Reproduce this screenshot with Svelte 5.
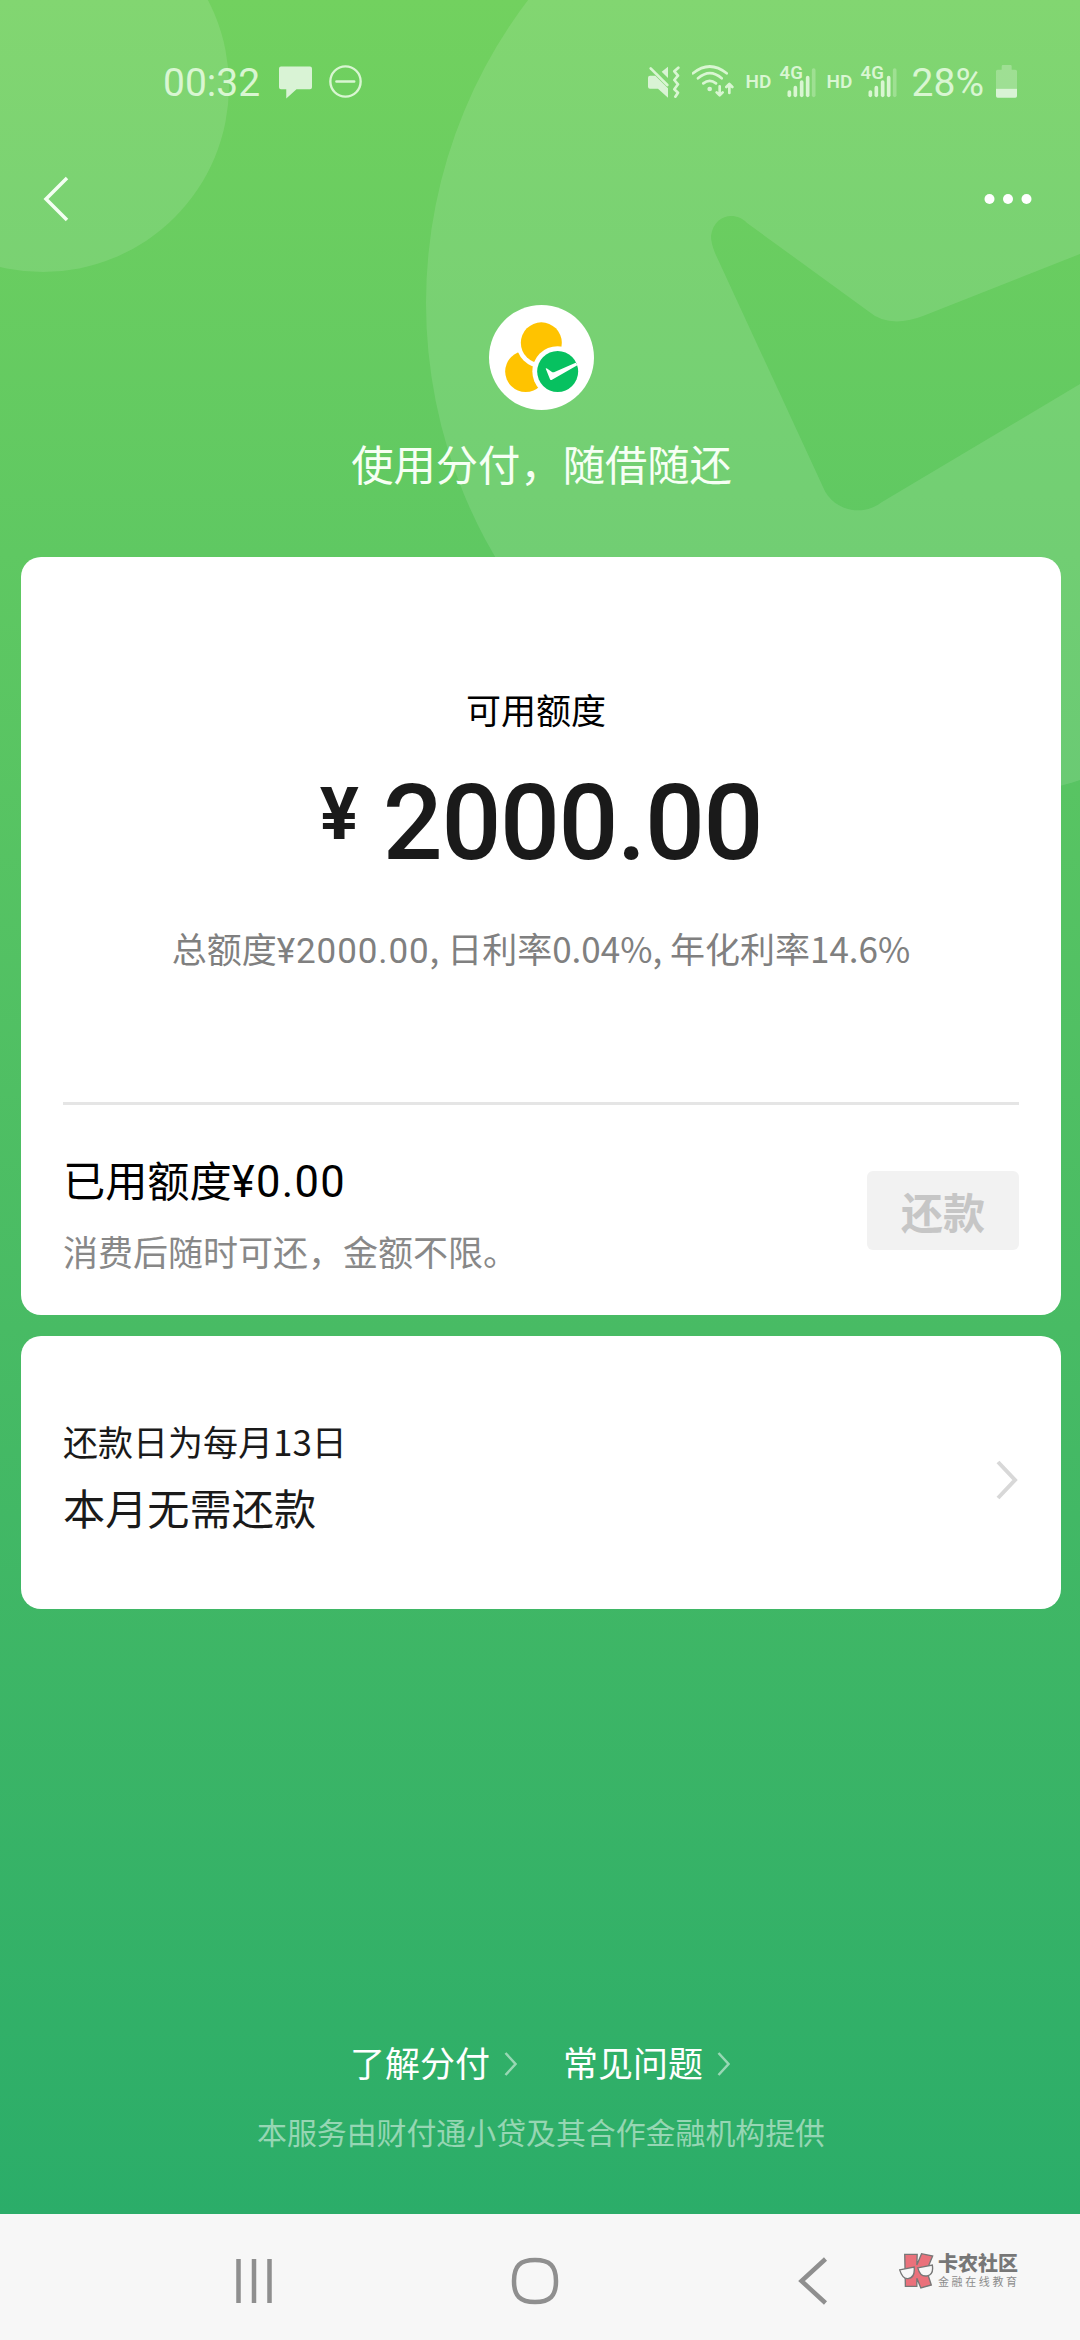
<script>
	const account = {
		available: '2000.00',
		total: '¥2000.00',
		daily: '0.04%',
		yearly: '14.6%',
		used: '¥0.00',
		dueDay: 13
	};

	const links = ['了解分付', '常见问题'];
	const sims = ['sim1', 'sim2'];
	const bars = [
		{ x: 28, top: 79 },
		{ x: 46, top: 66 },
		{ x: 65, top: 49 },
		{ x: 83, top: 36 }
	];
</script>

<div class="screen">
	<main class="app">
		<svg class="backdrop" viewBox="0 0 1080 900" aria-hidden="true">
			<circle cx="43" cy="86" r="186" />
			<path
				fill-rule="evenodd"
				d="M426 303a501 501 0 1 0 1002 0a501 501 0 1 0-1002 0ZM1080 254L923 316Q889 329 868 311L747 223C736 211 714 214 711 236Q711 243 715 253L823 487C832 510 862 518 882 502L1080 384Z"
			/>
		</svg>

		<header class="status">
			<div class="status-side">
				<span class="clock">00:32</span>
				<svg class="bubble" viewBox="415 74 100 105">
					<path d="M421 81h88q6 0 6 6v57q0 6-6 6h-41l-31 28v-28h-16q-6 0-6-6V87q0-6 6-6z" />
				</svg>
				<svg class="dnd" viewBox="566 76 98 98">
					<circle cx="615" cy="125" r="45" />
					<path d="M588 125h53" />
				</svg>
			</div>
			<div class="status-side">
				<svg class="mute" viewBox="54 70 96 105">
					<path d="M60 105h16l38 38v28l-30-27H60q-6 0-6-6v-27q0-6 6-6zM95 93l19-15v34z" />
					<path class="line" d="M62 83l50 50" />
					<path class="line" d="M145 81l-12 11 11 13-11 13 11 13-11 15 11 10-8 12" />
				</svg>
				<svg class="wifi" viewBox="185 70 126 105">
					<path class="line" d="M188 98q50-41 101 0M203 113q36-31 71 0M219 128q19-15 38 0M268 137v26M259 155l9 9 9-9M297 157v-26M288 139l9-9 9 9" />
					<circle cx="238" cy="145" r="7" />
				</svg>
				{#each sims as sim (sim)}
					<span class="hd">HD</span>
					<div class="signal">
						<svg viewBox="0 0 108 105">
							{#each bars as b}
								<path d="M{b.x} {b.top + 5}V94" />
							{/each}
							<path class="faded" d="M101 18V94" />
						</svg>
						<span>4G</span>
					</div>
				{/each}
				<span class="percent">28%</span>
				<svg class="battery" viewBox="1098 70 63 105">
					<path class="faded" d="M1115 87V77q0-4 4-4h22q4 0 4 4v10h11q5 0 5 5v52h-63V92q0-5 5-5z" />
					<path d="M1098 144h63v22q0 5-5 5h-53q-5 0-5-5z" />
				</svg>
			</div>
		</header>

		<nav class="topbar">
			<svg class="back" viewBox="0 0 26 46"><path d="M24 2L3 23l21 21" /></svg>
			<svg class="more" viewBox="0 0 48 12">
				<circle cx="5.5" cy="6" r="5" /><circle cx="24" cy="6" r="5" /><circle cx="42.5" cy="6" r="5" />
			</svg>
		</nav>

		<section class="hero">
			<svg class="logo" viewBox="507 44.5 315 315">
				<circle class="white" cx="664.5" cy="202" r="157.5" />
				<circle class="yellow" cx="617" cy="244" r="61.5" />
				<circle class="white" cx="664" cy="158" r="75" />
				<circle class="yellow" cx="664" cy="158" r="61.5" />
				<circle class="white" cx="713" cy="244" r="76" />
				<circle class="green" cx="713" cy="244" r="61.5" />
				<path class="white" d="M677 235q1-2 4 0l16 11q2 1 5 0l65-28q3 3 5 7l-76 44q-4 2-6-2z" />
			</svg>
			<h1>使用分付，随借随还</h1>
		</section>

		<section class="card quota">
			<p class="label">可用额度</p>
			<p class="amount"><span class="yen">¥</span>{account.available}</p>
			<p class="rates">总额度<b>{account.total}</b>, 日利率{account.daily}, 年化利率{account.yearly}</p>
			<div class="used">
				<div>
					<p class="big black">已用额度<b>{account.used}</b></p>
					<p class="note">消费后随时可还，金额不限。</p>
				</div>
				<button disabled>还款</button>
			</div>
		</section>

		<section class="card due">
			<div>
				<p class="small">还款日为每月{account.dueDay}日</p>
				<p class="big">本月无需还款</p>
			</div>
			<svg viewBox="0 0 24 40"><path d="M3 2l17 18L3 38" /></svg>
		</section>

		<footer>
			<div class="links">
				{#each links as link}
					<span class="link">
						{link}
						<svg viewBox="0 0 13 26"><path d="M1.5 2l10 11-10 11" /></svg>
					</span>
				{/each}
			</div>
			<p>本服务由财付通小贷及其合作金融机构提供</p>
		</footer>
	</main>

	<div class="sysnav">
		<svg class="recents" viewBox="0 0 38 46"><path d="M3.5 1v44M19 1v44M34.5 1v44" /></svg>
		<svg class="home" viewBox="0 0 48 48">
			<path d="M24 3C39 3 45 9 45 24S39 45 24 45 3 39 3 24 9 3 24 3z" />
		</svg>
		<svg class="sysback" viewBox="0 0 30 48"><path d="M27.5 2L3.5 24l24 22" /></svg>
		<div class="brand">
			<svg viewBox="60 66 104 110">
				<path class="k" d="M77 73h37l-1 32 14-34 33 7-18 43 14 43-31 9-12-29v24H79z" />
				<path class="glass" d="M62 119l43-8c2 18-3 32-18 34-14 2-20-10-25-26zM116 113l43-8c3 17-2 29-15 32-16 3-24-7-28-24z" />
			</svg>
			<div>
				<strong>卡农社区</strong>
				<small>金融在线教育</small>
			</div>
		</div>
	</div>
</div>

<style>
	:global(body) {
		margin: 0;
	}
	.screen {
		width: 1080px;
		height: 2340px;
		display: flex;
		flex-direction: column;
		overflow: hidden;
		font-family: 'Noto Sans CJK SC', sans-serif;
		color: #1a1a1a;
	}
	.app {
		position: relative;
		display: flex;
		flex-direction: column;
		height: 2214px;
		background: linear-gradient(#72d15f, #5fc862 25%, #48bb64 60%, #2bad69);
	}
	.app > :not(.backdrop) {
		position: relative;
	}
	.backdrop {
		position: absolute;
		top: 0;
		left: 0;
		width: 1080px;
		height: 900px;
		fill: rgba(255, 255, 255, 0.115);
	}
	p,
	h1 {
		margin: 0;
		font-weight: 400;
	}
	svg {
		display: block;
		flex: none;
	}

	.status {
		display: flex;
		justify-content: space-between;
		height: 162px;
		padding: 0 63px 0 163px;
		font-family: Roboto, sans-serif;
		color: #d9f6d2;
		fill: #d9f3d5;
	}
	.status-side {
		display: flex;
		align-items: center;
	}
	.status svg {
		height: 35px;
	}
	.clock,
	.percent {
		padding-top: 3px;
		font-size: 39px;
	}
	.line,
	.dnd,
	.signal svg {
		fill: none;
		stroke: #d9f6d2;
		stroke-width: 8;
		stroke-linecap: round;
		stroke-linejoin: round;
	}
	.bubble {
		width: 33px;
		margin-left: 19px;
	}
	.status .dnd {
		width: 33px;
		height: 33px;
		margin-left: 17px;
		stroke-width: 7;
	}
	.mute {
		width: 32px;
	}
	.wifi {
		width: 42px;
		margin-left: 12px;
	}
	.hd {
		width: 27px;
		margin-left: 12px;
		font-size: 19px;
		font-weight: 600;
	}
	.signal {
		position: relative;
		width: 36px;
		margin-left: 7px;
	}
	.signal + .hd {
		margin-left: 11px;
	}
	.signal svg {
		width: 36px;
		stroke-width: 11;
	}
	.signal span {
		position: absolute;
		top: -2px;
		left: 0;
		font-size: 18.5px;
		font-weight: 600;
	}
	.faded {
		opacity: 0.35;
	}
	.percent {
		margin-left: 15px;
	}
	.battery {
		width: 21px;
		margin-left: 12px;
	}

	.topbar {
		display: flex;
		justify-content: space-between;
		align-items: center;
		height: 74px;
		padding: 0 48px 0 43px;
	}
	.back {
		width: 26px;
		height: 46px;
		fill: none;
		stroke: #f4fff2;
		stroke-width: 3.5;
	}
	.more {
		width: 48px;
		height: 12px;
		fill: #fff;
	}

	.hero {
		display: flex;
		flex-direction: column;
		align-items: center;
		height: 252px;
		padding: 69px 0 0 3px;
	}
	.logo {
		width: 105px;
		height: 105px;
	}
	.white {
		fill: #fff;
	}
	.yellow {
		fill: #ffc300;
	}
	.green {
		fill: #07c160;
	}
	h1 {
		margin-top: 23px;
		font-size: 42.3px;
		line-height: 60px;
		color: #f6fff4;
	}

	.card {
		margin: 0 19px 0 21px;
		border-radius: 20px;
		background: #fff;
		box-sizing: border-box;
	}
	.quota {
		height: 758px;
		padding: 127px 42px 0;
		text-align: center;
	}
	.label {
		padding-right: 10px;
		font-size: 35px;
		line-height: 50px;
		color: #000;
	}
	.amount {
		display: flex;
		justify-content: center;
		height: 124px;
		margin-top: 27px;
		font: 500 105.5px/124px Roboto, sans-serif;
		letter-spacing: -1.4px;
	}
	.yen {
		width: 63px;
		font-size: 73px;
		font-weight: 700;
		line-height: 106px;
		text-align: left;
	}
	.rates {
		margin-top: 38px;
		font-size: 35px;
		line-height: 50px;
		color: #808080;
		white-space: nowrap;
	}
	b {
		font-family: Roboto, sans-serif;
		font-weight: 400;
		letter-spacing: 0.9px;
	}
	.used {
		display: flex;
		justify-content: space-between;
		margin-top: 125px;
		padding-top: 44px;
		border-top: 3px solid #e5e5e5;
		text-align: left;
	}
	.used b {
		font-size: 43.5px;
		letter-spacing: 1.3px;
	}
	.big {
		font-size: 42.2px;
		line-height: 60px;
	}
	.black {
		color: #000;
	}
	.small {
		font-size: 35px;
		line-height: 50px;
	}
	.note {
		margin-top: 13px;
		font-size: 35px;
		line-height: 50px;
		color: #888;
	}
	button {
		width: 152px;
		height: 79px;
		margin-top: 22px;
		padding: 0;
		border: 0;
		border-radius: 6px;
		background: #f2f2f2;
		color: #c6c6c6;
		font: 700 42px/76px 'Noto Sans CJK SC', sans-serif;
	}
	.due {
		display: flex;
		justify-content: space-between;
		align-items: flex-start;
		height: 273px;
		margin-top: 21px;
		padding: 80px 42px 0;
	}
	.due .big {
		margin-top: 11px;
	}
	.due svg {
		width: 24px;
		height: 40px;
		margin-top: 44px;
		fill: none;
		stroke: #d8d8d8;
		stroke-width: 4;
	}

	footer {
		margin-top: auto;
		padding-bottom: 59px;
		text-align: center;
	}
	.links {
		display: flex;
		justify-content: center;
		gap: 46px;
	}
	.link {
		display: flex;
		align-items: center;
		gap: 14px;
		font-size: 35px;
		line-height: 50px;
		color: #fff;
	}
	.link svg {
		width: 13px;
		height: 26px;
		margin-top: 3px;
		fill: none;
		stroke: rgba(255, 255, 255, 0.5);
		stroke-width: 2.5;
	}
	footer p {
		margin-top: 20px;
		padding-left: 2px;
		font-size: 29.9px;
		line-height: 48px;
		color: rgba(255, 255, 255, 0.5);
	}

	.sysnav {
		display: flex;
		align-items: center;
		height: 126px;
		padding: 8px 0 0 235px;
		box-sizing: border-box;
		background: #f7f7f7;
		fill: none;
		stroke: #8f8f8f;
		stroke-width: 4.5;
	}
	.recents {
		width: 38px;
		height: 46px;
	}
	.home {
		width: 48px;
		height: 48px;
		margin-left: 238px;
	}
	.sysback {
		width: 30px;
		height: 48px;
		margin-left: 239px;
	}
	.brand {
		display: flex;
		gap: 4px;
		margin: -21px 0 0 71px;
	}
	.brand svg {
		width: 35px;
		height: 37px;
		stroke: #777;
		stroke-width: 4;
	}
	.k {
		fill: #ea717b;
	}
	.glass {
		fill: #f7f7f7;
	}
	.brand strong,
	.brand small {
		display: block;
		white-space: nowrap;
		color: #777;
	}
	.brand strong {
		font-size: 20px;
		font-weight: 900;
		line-height: 22px;
	}
	.brand small {
		font-size: 11px;
		line-height: 14px;
		letter-spacing: 2.6px;
		color: #8c8c8c;
	}
</style>
